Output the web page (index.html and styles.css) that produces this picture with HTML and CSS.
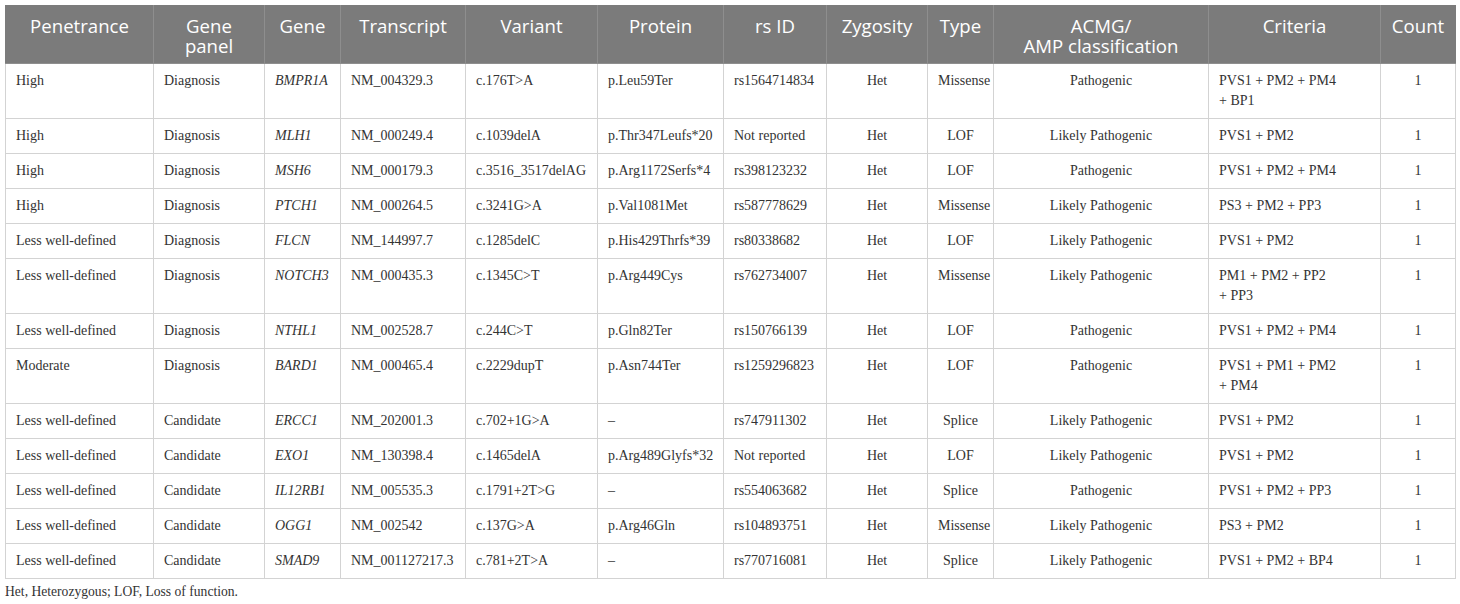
FILE: index.html
```html
<!DOCTYPE html>
<html>
<head>
<meta charset="utf-8">
<link rel="stylesheet" href="styles.css">
</head>
<body>
<table class="vt">
<colgroup>
<col class="c1"><col class="c2"><col class="c3"><col class="c4"><col class="c5"><col class="c6"><col class="c7"><col class="c8"><col class="c9"><col class="c10"><col class="c11"><col class="c12">
</colgroup>
<thead>
<tr><th>Penetrance</th><th>Gene<br>panel</th><th>Gene</th><th>Transcript</th><th>Variant</th><th>Protein</th><th>rs ID</th><th>Zygosity</th><th>Type</th><th>ACMG/<br>AMP classification</th><th>Criteria</th><th>Count</th></tr>
</thead>
<tbody>
<tr><td>High</td><td>Diagnosis</td><td class="g">BMPR1A</td><td>NM_004329.3</td><td>c.176T&gt;A</td><td>p.Leu59Ter</td><td>rs1564714834</td><td class="ct">Het</td><td class="ct">Missense</td><td class="ct">Pathogenic</td><td>PVS1 + PM2 + PM4<br>+ BP1</td><td class="ct">1</td></tr>
<tr><td>High</td><td>Diagnosis</td><td class="g">MLH1</td><td>NM_000249.4</td><td>c.1039delA</td><td>p.Thr347Leufs*20</td><td>Not reported</td><td class="ct">Het</td><td class="ct">LOF</td><td class="ct">Likely Pathogenic</td><td>PVS1 + PM2</td><td class="ct">1</td></tr>
<tr><td>High</td><td>Diagnosis</td><td class="g">MSH6</td><td>NM_000179.3</td><td>c.3516_3517delAG</td><td>p.Arg1172Serfs*4</td><td>rs398123232</td><td class="ct">Het</td><td class="ct">LOF</td><td class="ct">Pathogenic</td><td>PVS1 + PM2 + PM4</td><td class="ct">1</td></tr>
<tr><td>High</td><td>Diagnosis</td><td class="g">PTCH1</td><td>NM_000264.5</td><td>c.3241G&gt;A</td><td>p.Val1081Met</td><td>rs587778629</td><td class="ct">Het</td><td class="ct">Missense</td><td class="ct">Likely Pathogenic</td><td>PS3 + PM2 + PP3</td><td class="ct">1</td></tr>
<tr><td>Less well-defined</td><td>Diagnosis</td><td class="g">FLCN</td><td>NM_144997.7</td><td>c.1285delC</td><td>p.His429Thrfs*39</td><td>rs80338682</td><td class="ct">Het</td><td class="ct">LOF</td><td class="ct">Likely Pathogenic</td><td>PVS1 + PM2</td><td class="ct">1</td></tr>
<tr><td>Less well-defined</td><td>Diagnosis</td><td class="g">NOTCH3</td><td>NM_000435.3</td><td>c.1345C&gt;T</td><td>p.Arg449Cys</td><td>rs762734007</td><td class="ct">Het</td><td class="ct">Missense</td><td class="ct">Likely Pathogenic</td><td>PM1 + PM2 + PP2<br>+ PP3</td><td class="ct">1</td></tr>
<tr><td>Less well-defined</td><td>Diagnosis</td><td class="g">NTHL1</td><td>NM_002528.7</td><td>c.244C&gt;T</td><td>p.Gln82Ter</td><td>rs150766139</td><td class="ct">Het</td><td class="ct">LOF</td><td class="ct">Pathogenic</td><td>PVS1 + PM2 + PM4</td><td class="ct">1</td></tr>
<tr><td>Moderate</td><td>Diagnosis</td><td class="g">BARD1</td><td>NM_000465.4</td><td>c.2229dupT</td><td>p.Asn744Ter</td><td>rs1259296823</td><td class="ct">Het</td><td class="ct">LOF</td><td class="ct">Pathogenic</td><td>PVS1 + PM1 + PM2<br>+ PM4</td><td class="ct">1</td></tr>
<tr><td>Less well-defined</td><td>Candidate</td><td class="g">ERCC1</td><td>NM_202001.3</td><td>c.702+1G&gt;A</td><td>–</td><td>rs747911302</td><td class="ct">Het</td><td class="ct">Splice</td><td class="ct">Likely Pathogenic</td><td>PVS1 + PM2</td><td class="ct">1</td></tr>
<tr><td>Less well-defined</td><td>Candidate</td><td class="g">EXO1</td><td>NM_130398.4</td><td>c.1465delA</td><td>p.Arg489Glyfs*32</td><td>Not reported</td><td class="ct">Het</td><td class="ct">LOF</td><td class="ct">Likely Pathogenic</td><td>PVS1 + PM2</td><td class="ct">1</td></tr>
<tr><td>Less well-defined</td><td>Candidate</td><td class="g">IL12RB1</td><td>NM_005535.3</td><td>c.1791+2T&gt;G</td><td>–</td><td>rs554063682</td><td class="ct">Het</td><td class="ct">Splice</td><td class="ct">Pathogenic</td><td>PVS1 + PM2 + PP3</td><td class="ct">1</td></tr>
<tr><td>Less well-defined</td><td>Candidate</td><td class="g">OGG1</td><td>NM_002542</td><td>c.137G&gt;A</td><td>p.Arg46Gln</td><td>rs104893751</td><td class="ct">Het</td><td class="ct">Missense</td><td class="ct">Likely Pathogenic</td><td>PS3 + PM2</td><td class="ct">1</td></tr>
<tr><td>Less well-defined</td><td>Candidate</td><td class="g">SMAD9</td><td>NM_001127217.3</td><td>c.781+2T&gt;A</td><td>–</td><td>rs770716081</td><td class="ct">Het</td><td class="ct">Splice</td><td class="ct">Likely Pathogenic</td><td>PVS1 + PM2 + BP4</td><td class="ct">1</td></tr>
</tbody>
</table>
<p class="note">Het, Heterozygous; LOF, Loss of function.</p>
</body>
</html>
```
FILE: styles.css
```css
html, body {
  margin: 0;
  background: #ffffff;
}
body {
  padding: 5px;
  font-family: "Liberation Serif", "Times New Roman", serif;
  color: #333333;
}
.vt {
  table-layout: fixed;
  width: 1450px;
  border-collapse: collapse;
  font-size: 14px;
  line-height: 20px;
}
.c1 { width: 148px; }
.c2 { width: 111px; }
.c3 { width: 76px; }
.c4 { width: 125px; }
.c5 { width: 132px; }
.c6 { width: 126px; }
.c7 { width: 103px; }
.c8 { width: 101px; }
.c9 { width: 66px; }
.c10 { width: 215px; }
.c11 { width: 172px; }
.c12 { width: 75px; }
.vt th {
  background: #7b7b7b;
  color: #ffffff;
  font-family: "Open Sans", "Liberation Sans", sans-serif;
  font-weight: 400;
  font-size: 18.6px;
  line-height: 20px;
  text-align: center;
  vertical-align: top;
  padding: 10px 2px 7px;
  border: 1px solid #8e8e8e;
  border-top-color: #7b7b7b;
  white-space: nowrap;
}
.vt th:first-child { border-left-color: #7b7b7b; }
.vt th:last-child { border-right-color: #7b7b7b; }
.vt td {
  border: 1px solid #d3d3d3;
  padding: 7px 10px 7px 10px;
  vertical-align: top;
  text-align: left;
  white-space: nowrap;
}
.vt td.ct { text-align: center; }
.vt td.g { font-style: italic; }
.note {
  margin: 5px 0 0;
  font-size: 13.6px;
  line-height: 16px;
}
```
